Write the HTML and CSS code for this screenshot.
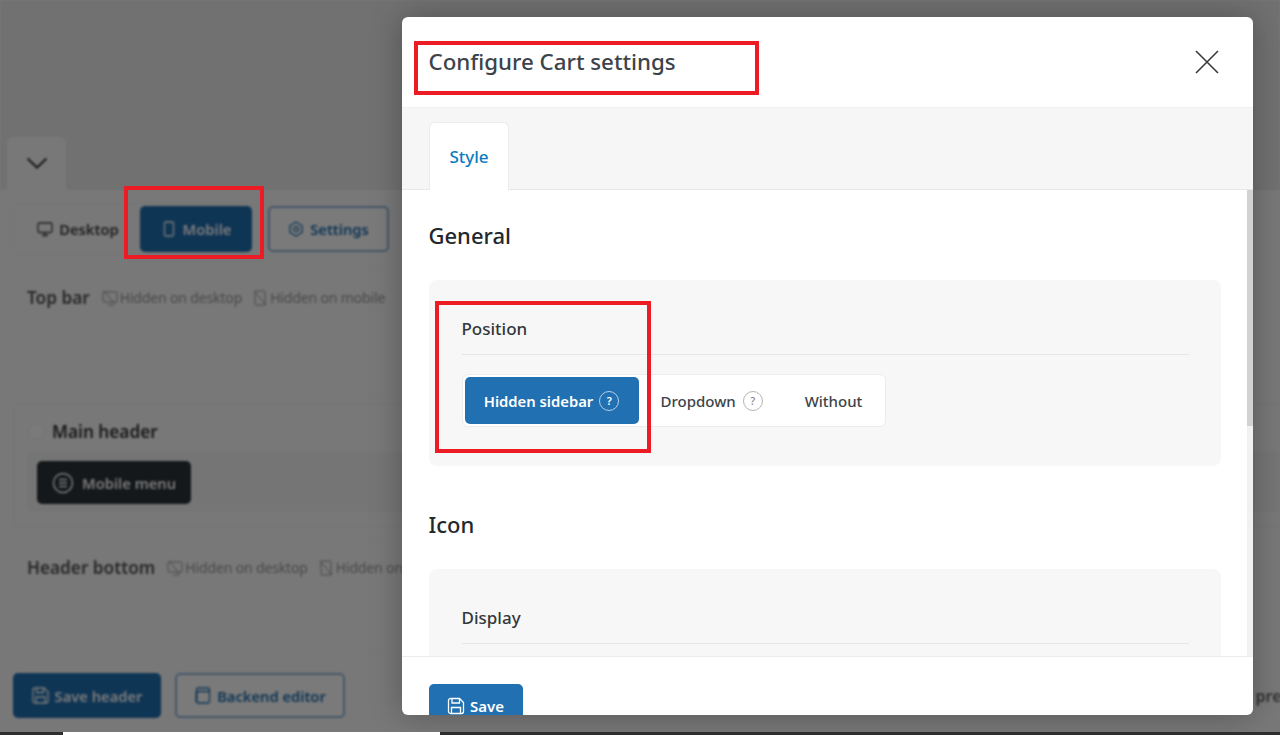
FILE: index.html
```html
<!DOCTYPE html>
<html lang="en">
<head>
<meta charset="utf-8">
<title>Configure Cart settings</title>
<link rel="stylesheet" href="styles.css">
</head>
<body>
<div class="page">
  <div class="app">
    <div class="top-area">
      <div class="collapse-tab">
        <svg class="chev" width="22" height="12" viewBox="0 0 22 12"><path d="M1.500 1.500 11 10.500 20.500 1.500" fill="none" stroke="#333" stroke-width="2"/></svg>
      </div>
    </div>
    <div class="builder">
      <div class="device-row">
        <div class="device-group">
          <div class="dev-btn plain">
            <svg width="16" height="16" viewBox="0 0 16 16" fill="none" stroke="currentColor" stroke-width="1.3"><rect x="1" y="2" width="14" height="9.500" rx="1.500"/><path d="M5 14.500h6M8 11.500v3"/></svg>
            Desktop
          </div>
          <div class="dev-btn primary">
            <svg width="16" height="16" viewBox="0 0 16 16" fill="none" stroke="currentColor" stroke-width="1.3"><rect x="3.500" y="1" width="9" height="14" rx="1.500"/></svg>
            Mobile
          </div>
        </div>
        <div class="dev-btn outline settings">
          <svg width="16" height="16" viewBox="0 0 16 16" fill="none" stroke="currentColor" stroke-width="1.3"><path d="M8 1l6 3.500v7L8 15l-6-3.500v-7z"/><circle cx="8" cy="8" r="2.300"/></svg>
          Settings
        </div>
      </div>

      <section class="zone zone-top">
        <div class="zone-title">
          <strong>Top bar</strong>
          <span class="hint"><svg width="16" height="16" viewBox="0 0 16 16" fill="none" stroke="currentColor"><rect x="1" y="2" width="14" height="10" rx="1"/><path d="M2 1l11 13M6 15h6"/></svg>Hidden on desktop</span>
          <span class="hint"><svg width="16" height="16" viewBox="0 0 16 16" fill="none" stroke="currentColor"><rect x="3" y="1" width="10" height="14" rx="1"/><path d="M2 1l12 14"/></svg>Hidden on mobile</span>
        </div>
      </section>

      <section class="zone zone-main">
        <div class="zone-title main-title"><span class="radio"></span><strong>Main header</strong></div>
        <div class="slot">
          <div class="menu-chip">
            <svg width="22" height="22" viewBox="0 0 22 22" fill="none" stroke="currentColor" stroke-width="1.500"><circle cx="11" cy="11" r="9.500"/><path d="M7 7.500h8M7 11h8M7 14.500h8"/></svg>
            Mobile menu
          </div>
        </div>
      </section>

      <section class="zone zone-bottom">
        <div class="zone-title">
          <strong>Header bottom</strong>
          <span class="hint"><svg width="16" height="16" viewBox="0 0 16 16" fill="none" stroke="currentColor"><rect x="1" y="2" width="14" height="10" rx="1"/><path d="M2 1l11 13M6 15h6"/></svg>Hidden on desktop</span>
          <span class="hint"><svg width="16" height="16" viewBox="0 0 16 16" fill="none" stroke="currentColor"><rect x="3" y="1" width="10" height="14" rx="1"/><path d="M2 1l12 14"/></svg>Hidden on mobile</span>
        </div>
      </section>

      <div class="action-row">
        <div class="dev-btn primary save-header">
          <svg width="17" height="17" viewBox="0 0 17 17" fill="none" stroke="currentColor" stroke-width="1.3"><path d="M1 3a2 2 0 0 1 2-2h9l4 4v9a2 2 0 0 1-2 2H3a2 2 0 0 1-2-2z"/><path d="M4.500 1v4.500h7V1M4 16v-6h9v6"/></svg>
          Save header
        </div>
        <div class="dev-btn outline backend">
          <svg width="17" height="17" viewBox="0 0 17 17" fill="none" stroke="currentColor" stroke-width="1.3"><rect x="2.500" y="1" width="13" height="15" rx="1.500"/><path d="M2.500 4.500h13M1 6.500h3M1 10h3M1 13.500h3"/></svg>
          Backend editor
        </div>
        <span class="preview">Live preview</span>
      </div>
    </div>
  </div>
  <div class="taskbar"><span class="task-tab"></span></div>
</div>

<div class="overlay"></div>

<div class="modal">
  <header class="modal-head">
    <h1>Configure Cart settings</h1>
    <svg class="close" width="24" height="24" viewBox="0 0 24 24"><path d="M1 1l22 22M23 1 1 23" stroke="#3a3a3a" stroke-width="1.600" fill="none"/></svg>
  </header>
  <nav class="tabs"><div class="tab">Style</div></nav>
  <div class="modal-body">
    <div class="scroll-content">
      <h2>General</h2>
      <section class="panel panel-first">
        <h3>Position</h3>
        <div class="segment">
          <div class="seg active">Hidden sidebar <span class="q">?</span></div>
          <div class="seg drop">Dropdown <span class="q">?</span></div>
          <div class="seg without">Without</div>
        </div>
      </section>
      <h2>Icon</h2>
      <section class="panel">
        <h3>Display</h3>
      </section>
    </div>
    <div class="scrollbar"><div class="thumb"></div></div>
  </div>
  <footer class="modal-foot">
    <div class="save">
      <svg width="18" height="18" viewBox="0 0 18 18" fill="none" stroke="currentColor" stroke-width="1.3"><path d="M1.500 3.500a2 2 0 0 1 2-2h9l4 4v9a2 2 0 0 1-2 2h-11a2 2 0 0 1-2-2z"/><path d="M5 1.500v4.500h7.500V1.500M4.500 16.500v-6h9v6"/></svg>
      <span class="save-label">Save</span>
    </div>
  </footer>
</div>

<div class="mark mark-title"></div>
<div class="mark mark-mobile"></div>
<div class="mark mark-position"></div>
</body>
</html>
```
FILE: styles.css
```css
* { box-sizing: border-box; }
html, body { margin: 0; height: 735px; overflow: hidden; }
body { font-family: "Noto Sans", "Open Sans", "Liberation Sans", sans-serif; background: #fff; color: #2c3338; position: relative; }

.page { height: 735px; display: flex; flex-direction: column; }
.app { height: 732px; overflow: hidden; filter: blur(1.2px); background: #fff; }
.top-area { height: 190px; background: #ececec; padding: 137px 0 0 7px; }
.collapse-tab { width: 59px; height: 53px; background: #fbfbfb; border-radius: 6px 6px 0 0; display: flex; align-items: center; justify-content: center; padding-bottom: 1px; }
.builder { height: 542px; background: #fbfbfb; padding: 13px 0 0 13px; display: flex; flex-direction: column; }

.device-row { display: flex; align-items: center; gap: 16px; height: 52px; }
.device-group { display: flex; align-items: center; gap: 4px; height: 52px; width: 243px; border: 1px solid #f2f2f2; border-radius: 6px; padding-left: 6px; }
.dev-btn { display: flex; align-items: center; justify-content: center; gap: 6px; height: 46px; border-radius: 5px; font-size: 14.700px; font-weight: 600; white-space: nowrap; }
.plain { width: 116px; color: #444; }
.primary { background: #2170b2; color: #fff; }
.device-group .primary { width: 112px; }
.outline { border: 2px solid #8fb6d8; color: #2170b2; background: #fff; }
.settings { width: 121px; margin-left: -4px; }

.zone { width: 1500px; border: 1px solid #f6f6f6; border-radius: 6px; padding: 0 13px; }
.zone-title { display: flex; align-items: center; gap: 12px; font-size: 17.200px; color: #555; }
.zone-title strong { font-weight: 600; }
.hint { display: flex; align-items: center; gap: 2px; font-size: 14px; color: #999; letter-spacing: -.15px; }
.hint + .hint { margin-left: -2px; }
.zone-top { height: 125px; margin-top: 15px; padding-top: 15px; }
.zone-main { height: 124px; margin-top: 8px; padding-top: 16px; border-color: #f0f0f0; }
.main-title { gap: 7px; color: #333; padding-left: 1px; }
.radio { width: 17px; height: 17px; border-radius: 50%; background: #fff; border: 1px solid #f0f0f0; }
.slot { height: 60px; margin-top: 9px; background: #f5f5f5; border-radius: 6px; padding: 9px 10px; }
.menu-chip { width: 154px; height: 43px; background: #2c3338; border-radius: 5px; color: #fff; font-size: 14.700px; font-weight: 600; display: flex; align-items: center; gap: 8px; padding-left: 15px; }
.zone-bottom { height: 113px; margin-top: 14px; padding-top: 14px; }

.action-row { display: flex; align-items: center; gap: 14px; height: 45px; margin-top: 19px; width: 1400px; }
.save-header { width: 148px; height: 45px; }
.backend { width: 170px; height: 45px; }
.preview { margin-left: 861px; font-size: 16px; font-weight: 600; color: #666; white-space: nowrap; }

.taskbar { height: 3px; background: #2e2e2e; padding-left: 63px; position: relative; z-index: 3; }
.task-tab { display: block; width: 377px; height: 3px; background: #fff; }

.overlay { position: absolute; left: 0; top: 0; width: 1280px; height: 732px; background: rgba(0, 0, 0, .52); }

.modal { position: absolute; left: 402px; top: 17px; width: 851px; height: 698px; background: #fff; border-radius: 6px; overflow: hidden; display: flex; flex-direction: column; box-shadow: 0 0 32px rgba(0, 0, 0, .28); }
.modal-head { flex: none; height: 91px; display: flex; align-items: center; justify-content: space-between; padding: 0 34px 1px 26.500px; border-bottom: 1px solid #f1f1f1; }
.modal-head h1 { margin: 0; font-size: 22.300px; font-weight: 500; color: #3c434a; line-height: 30px; }
.tabs { flex: none; height: 82px; background: #f6f6f6; border-bottom: 1px solid #e8e8e8; padding: 14px 0 0 27px; }
.tab { width: 80px; height: 68px; background: #fff; border: 1px solid #ececec; border-bottom: 0; border-radius: 6px 6px 0 0; color: #0a7cbf; font-size: 17px; font-weight: 500; display: flex; align-items: center; justify-content: center; }
.modal-body { flex: none; height: 466px; display: flex; overflow: hidden; }
.scroll-content { flex: 1; min-width: 0; padding: 28px 26px 0 27px; }
.scroll-content h2 { margin: 0 0 0 -.5px; font-size: 22px; font-weight: 500; line-height: 34px; color: #23282d; }
.panel { width: 792px; background: #f7f7f7; border-radius: 8px; padding: 35px 32px 0 32.500px; margin-top: 28px; height: 186px; }
.panel-first { margin-bottom: 41px; }
.panel h3 { margin: 0; height: 40px; font-size: 17px; font-weight: 500; line-height: 27px; color: #32373c; border-bottom: 1px solid #e6e6e6; }
.segment { width: 424px; height: 53px; margin-top: 19px; background: #fff; border: 1px solid #ececec; border-radius: 6px; display: flex; align-items: center; padding-left: 2px; font-size: 15px; font-weight: 500; color: #3c434a; }
.seg { display: flex; align-items: center; gap: 6px; white-space: nowrap; }
.active { width: 174px; height: 47px; background: #2170b2; color: #fff; border-radius: 5px; justify-content: center; font-weight: 600; font-size: 14.800px; }
.drop { margin-left: 22px; gap: 7px; }
.without { margin-left: 42px; }
.q { width: 20px; height: 20px; border: 1px solid #b5b5b5; border-radius: 50%; font-size: 11px; display: flex; align-items: center; justify-content: center; color: #888; }
.active .q { border-color: #b4cfe6; color: #fff; }
.scrollbar { flex: none; width: 6px; background: #f1f1f1; }
.thumb { height: 236px; background: #d2d2d2; }
.modal-foot { flex: none; height: 59px; border-top: 1px solid #ececec; padding: 27px 0 0 26.500px; }
.save { width: 94px; height: 44px; background: #2170b2; color: #fff; border-radius: 5px; font-size: 15px; font-weight: 600; display: flex; align-items: center; justify-content: center; gap: 5px; }
.save-label { line-height: 16px; }

.mark { position: absolute; border: 4px solid #ed1c24; }
.mark-title { left: 414px; top: 41px; width: 345px; height: 54px; }
.mark-mobile { left: 124px; top: 186px; width: 140px; height: 73px; }
.mark-position { left: 435px; top: 301px; width: 216px; height: 152px; }
```
